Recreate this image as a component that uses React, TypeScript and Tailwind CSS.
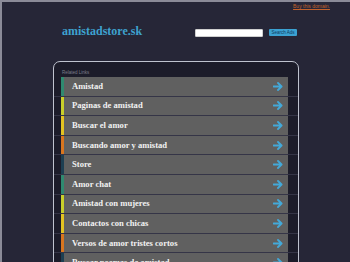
import React from "react";

const links = [
  { label: "Amistad", color: "bg-[#2f8a70]" },
  { label: "Paginas de amistad", color: "bg-[#c9cf2a]" },
  { label: "Buscar el amor", color: "bg-[#e3c322]" },
  { label: "Buscando amor y amistad", color: "bg-[#d9761f]" },
  { label: "Store", color: "bg-[#1d3f52]" },
  { label: "Amor chat", color: "bg-[#2f8a70]" },
  { label: "Amistad con mujeres", color: "bg-[#c9cf2a]" },
  { label: "Contactos con chicas", color: "bg-[#e3c322]" },
  { label: "Versos de amor tristes cortos", color: "bg-[#d9761f]" },
  { label: "Buscar poemas de amistad", color: "bg-[#1d3f52]" },
];

const Arrow = () => (
  <svg width="10" height="9" viewBox="0 0 10 9" className="shrink-0">
    <path
      d="M0.5 4.5H8.5M5 1L8.6 4.5L5 8"
      fill="none"
      stroke="#43a9d9"
      strokeWidth="1.8"
      strokeLinecap="round"
      strokeLinejoin="round"
    />
  </svg>
);

const App = () => {
  return (
    <div className="w-[350px] h-[262px] overflow-hidden bg-[#262637] border-l-2 border-t-2 border-[#8b8b98] font-['Liberation_Sans',sans-serif]">
      {/* top right link */}
      <div className="flex justify-end pr-[20px] pt-[1px] h-[9px]">
        <a className="text-[5px] leading-[7px] text-[#c2622c] underline">Buy this domain.</a>
      </div>

      {/* header */}
      <div className="flex items-center pl-[60px] pt-[11px] h-[29px]">
        <div className="w-[133px] font-['Liberation_Serif',serif] font-bold text-[12px] leading-[14px] text-[#3ea2cf]">
          amistadstore.sk
        </div>
        <div className="flex items-center gap-[6px] mt-[3px]">
          <div className="w-[68px] h-[8px] bg-white rounded-[1px] border border-[#cfcfcf]" />
          <div className="h-[7px] w-[28px] bg-[#3ba1d1] rounded-[1px] text-[4.5px] leading-[7px] text-center text-[#0f3a60]">
            Search Ads
          </div>
        </div>
      </div>

      {/* panel */}
      <div className="ml-[51px] mt-[21px] w-[246px] h-[220px] border-[1.5px] border-[#bfc3cf] rounded-[7px] bg-[#1c1c2a] pt-[6px]">
        <div className="pl-[8px] h-[9px] text-[4.5px] leading-[9px] text-[#7c7c8a]">Related Links</div>
        <div className="flex flex-col">
          {links.map((l) => (
            <div key={l.label} className="flex h-[19.6px] border-b border-[#353547]">
              <div className="w-[7px]" />
              <div className={`w-[3px] ${l.color}`} />
              <div className="flex-1 flex items-center justify-between bg-[#606060] pl-[8px] pr-[5px]">
                <span className="font-['Liberation_Serif',serif] font-bold text-[8.6px] text-[#f2f2f2]">
                  {l.label}
                </span>
                <Arrow />
              </div>
              <div className="w-[10px]" />
            </div>
          ))}
        </div>
      </div>
    </div>
  );
};

export default App;
